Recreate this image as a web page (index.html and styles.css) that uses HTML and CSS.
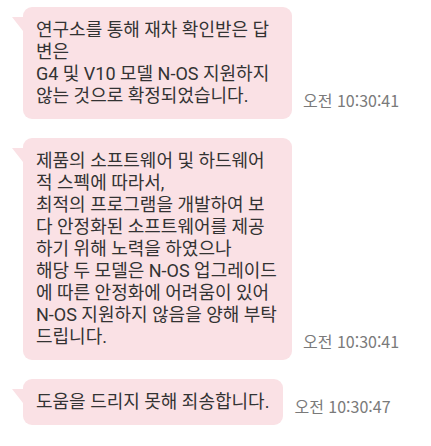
FILE: index.html
```html
<!DOCTYPE html>
<html lang="ko">
<head>
<meta charset="utf-8">
<title>채팅</title>
<link rel="stylesheet" href="styles.css">
</head>
<body>
<div class="chat">
  <div class="row">
    <div class="bubble wide">
      <span class="line">연구소를 통해 재차 확인받은 답</span>
      <span class="line">변은</span>
      <span class="line">G4 및 V10 모델 N-OS 지원하지</span>
      <span class="line">않는 것으로 확정되었습니다.</span>
    </div>
    <div class="time">오전 10:30:41</div>
  </div>
  <div class="row">
    <div class="bubble wide">
      <span class="line">제품의 소프트웨어 및 하드웨어</span>
      <span class="line">적 스펙에 따라서,</span>
      <span class="line">최적의 프로그램을 개발하여 보</span>
      <span class="line">다 안정화된 소프트웨어를 제공</span>
      <span class="line">하기 위해 노력을 하였으나</span>
      <span class="line">해당 두 모델은 N-OS 업그레이드</span>
      <span class="line">에 따른 안정화에 어려움이 있어</span>
      <span class="line">N-OS 지원하지 않음을 양해 부탁</span>
      <span class="line">드립니다.</span>
    </div>
    <div class="time">오전 10:30:41</div>
  </div>
  <div class="row">
    <div class="bubble">
      <span class="line">도움을 드리지 못해 죄송합니다.</span>
    </div>
    <div class="time">오전 10:30:47</div>
  </div>
</div>
</body>
</html>
```

FILE: styles.css
```css
html, body {
  margin: 0;
  padding: 0;
  background: #ffffff;
}

.chat {
  display: flex;
  flex-direction: column;
  gap: 19px;
  padding: 7px 0 0 23px;
}

.row {
  display: flex;
  align-items: flex-end;
  gap: 11px;
}

.bubble {
  position: relative;
  background: #fae1e5;
  border-radius: 9px;
  padding: 12px 14px 12px 13px;
  color: #333333;
  font-family: Roboto, "Noto Sans CJK KR", sans-serif;
  font-size: 18px;
  line-height: 22px;
  letter-spacing: 0;
  white-space: nowrap;
}

.bubble.wide {
  width: 242px;
}

.bubble::before {
  content: "";
  position: absolute;
  left: -11px;
  top: 10px;
  width: 11px;
  height: 14px;
  background: #fae1e5;
  clip-path: polygon(0 0, 100% 0, 100% 100%);
}

.line {
  display: block;
}

.time {
  color: #7a7a7a;
  font-family: "Noto Sans CJK KR", sans-serif;
  font-size: 16px;
  line-height: 18px;
  padding-bottom: 10px;
  white-space: nowrap;
}
```
